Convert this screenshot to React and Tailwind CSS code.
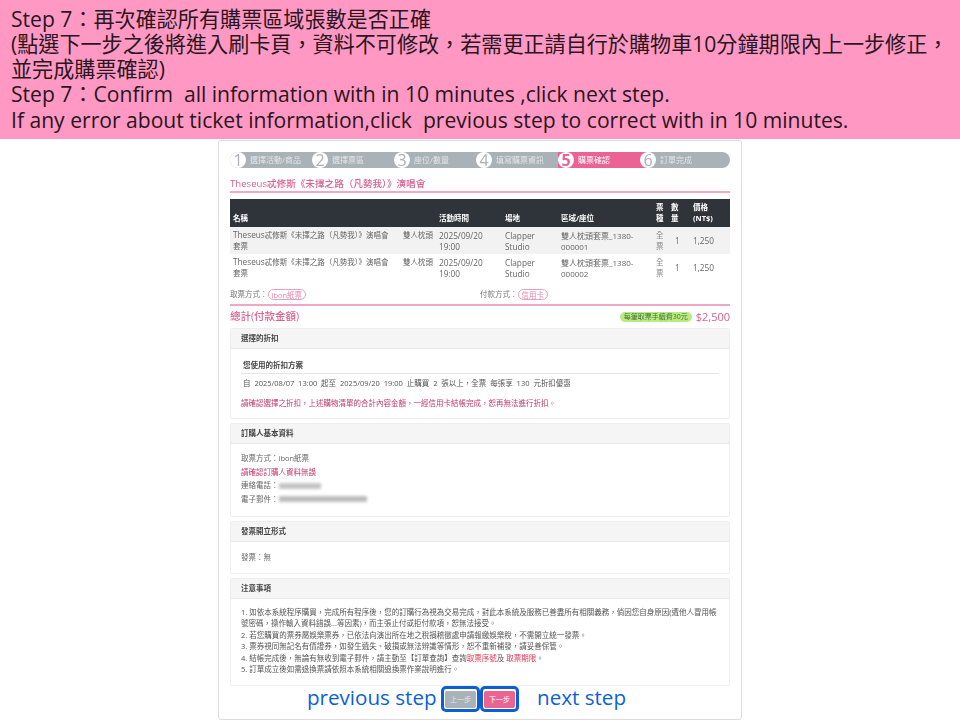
import React from "react";

const steps = ["選擇活動/商品", "選擇票區", "座位/數量", "填寫購票資訊", "購票確認", "訂單完成"];

const rows = [
  { seat: "雙人枕頭套票_1380-000001" },
  { seat: "雙人枕頭套票_1380-000002" },
];

const Panel = ({ title, className, children }) => (
  <div className={`border border-[#eeeeee] rounded-[2px] bg-white ${className}`}>
    <div className="h-5 bg-[#f5f5f5] border-b border-[#e8e8e8] pl-[10px] flex items-center text-[7.5px] font-semibold text-[#444]">
      {title}
    </div>
    {children}
  </div>
);

const App = () => {
  return (
    <div className="w-[960px] h-[720px] overflow-hidden bg-white font-['Open_Sans','Noto_Sans_CJK_TC',sans-serif]">
      <div className="h-[139px] bg-[#ff99c3] pl-[11px] pt-[5.5px] text-[21.1px] leading-[25.3px] text-[#2a1520] whitespace-nowrap">
        <div>Step 7：再次確認所有購票區域張數是否正確</div>
        <div>(點選下一步之後將進入刷卡頁，資料不可修改，若需更正請自行於購物車10分鐘期限內上一步修正，</div>
        <div>並完成購票確認)</div>
        <div>Step 7：Confirm&nbsp; all information with in 10 minutes ,click next step.</div>
        <div>If any error about ticket information,click&nbsp; previous step to correct with in 10 minutes.</div>
      </div>

      <div className="ml-[218px] mt-px w-[524px] h-[580px] border border-[#dddddd] rounded-[3px] px-[11px] pt-[11px] text-[#666]">
        <div className="blur-[0.3px]">
          {/* stepper */}
          <div className="h-4 flex rounded-full bg-[#a9b2b9] text-[8px] text-[#e3e7ea]">
            {steps.map((s, i) => (
              <div
                key={s}
                className={
                  i === 4
                    ? "w-[90px] -mr-2 h-4 flex items-center bg-[#ea6393] text-white"
                    : i === 5
                      ? "relative flex-1 h-4 flex items-center"
                      : "w-[82px] h-4 flex items-center"
                }
              >
                <span
                  className={`w-4 h-4 mr-[4px] shrink-0 rounded-full bg-white flex items-center justify-center text-[16px] ${
                    i === 4 ? "text-[#ea6393] font-bold" : "text-[#a9b2b9]"
                  }`}
                >
                  {i + 1}
                </span>
                {s}
              </div>
            ))}
          </div>

          <div className="mt-[9px] h-[16px] border-b-2 border-b-[#efa9c4] text-[9.6px] leading-[14px] text-[#d9628f] font-medium whitespace-nowrap">
            Theseus忒修斯《未擇之路（凡勢我）》演唱會
          </div>

          {/* order table */}
          <table className="mt-[6px] w-[500px] table-fixed border-collapse text-[7.5px] leading-[11px]">
            <colgroup>
              <col className="w-[170px]" />
              <col className="w-[36px]" />
              <col className="w-[66px]" />
              <col className="w-[56px]" />
              <col className="w-[95px]" />
              <col className="w-[14px]" />
              <col className="w-[23px]" />
              <col className="w-[40px]" />
            </colgroup>
            <thead>
              <tr className="h-[28px] bg-[#2f343b] text-white font-bold align-bottom">
                <th className="text-left pl-[3px] pb-[3px]">名稱</th>
                <th></th>
                <th className="text-left pl-[3px] pb-[3px]">活動時間</th>
                <th className="text-left pl-[3px] pb-[3px]">場地</th>
                <th className="text-left pl-[3px] pb-[3px]">區域/座位</th>
                <th className="text-left pl-[3px] pb-[3px]">票<br />種</th>
                <th className="text-left pl-[4px] pb-[3px]">數<br />量</th>
                <th className="text-left pl-[3px] pb-[3px]">價格<br />(NT$)</th>
              </tr>
            </thead>
            <tbody>
              {rows.map((r, i) => (
                <tr key={r.seat} className={`h-[27px] ${i === 0 ? "bg-[#f2f2f2]" : "bg-white"}`}>
                  <td className="pl-[3px] pr-[10px]"><span className="text-[8.25px]">Theseus</span>忒修斯《未擇之路（凡勢我）》演唱會套票</td>
                  <td className="pl-[3px] align-top pt-[3px] whitespace-nowrap">雙人枕頭</td>
                  <td className="pl-[3px] text-[8.25px]">2025/09/20<br />19:00</td>
                  <td className="pl-[3px] text-[8.25px]">Clapper<br />Studio</td>
                  <td className="pl-[3px] pr-[16px] text-[8px]">{r.seat}</td>
                  <td className="pl-[3px] text-[#888]">全票</td>
                  <td className="pl-[8px] text-[8.25px]">1</td>
                  <td className="pl-[3px] text-[8.25px]">1,250</td>
                </tr>
              ))}
            </tbody>
          </table>

          <div className="mt-[8px] h-[17px] flex text-[7.5px] text-[#777] border-b-2 border-b-[#efa9c4]">
            <div className="w-[250px] flex items-start">
              取票方式：
              <span className="px-[3px] h-[11px] leading-[10px] border border-[#e8a0bb] rounded-full text-[#e58aac]">ibon紙票</span>
            </div>
            <div className="flex items-start">
              付款方式：
              <span className="px-[3px] h-[11px] leading-[10px] border border-[#e8a0bb] rounded-full text-[#e58aac]">信用卡</span>
            </div>
          </div>

          <div className="h-[22px] flex items-center text-[#d9628f]">
            <span className="text-[10.5px] font-medium flex-1">總計(付款金額)</span>
            <span className="h-[10px] px-[4px] mr-[4px] rounded-full bg-[#b8ec80] text-[#4c6b3a] text-[7px] leading-[10px]">每筆取票手續費30元</span>
            <span className="text-[11px]">$2,500</span>
          </div>

          <Panel title="選擇的折扣" className="h-[91px] text-[7.5px]">
            <div className="px-[10px] pt-[9px]">
              <div className="pl-[2px] h-[16px] border-b border-[#e5e5e5] font-semibold text-[#444] leading-[15px]">您使用的折扣方案</div>
              <div className="pl-[2px] mt-[4px] leading-[11px] text-[#555] whitespace-nowrap">
                自&nbsp; 2025/08/07&nbsp; 13:00&nbsp; 起至&nbsp; 2025/09/20&nbsp; 19:00&nbsp; 止購買&nbsp; 2&nbsp; 張以上，全票&nbsp; 每張享&nbsp; 130&nbsp; 元折扣優惠
              </div>
              <div className="mt-[9px] text-[#c0396c] leading-[11px] whitespace-nowrap">
                請確認選擇之折扣，上述購物清單的合計內容金額，一經信用卡結帳完成，恕再無法進行折扣。
              </div>
            </div>
          </Panel>

          <Panel title="訂購人基本資料" className="mt-[4px] h-[94px] text-[7.5px]">
            <div className="px-[10px] pt-[8px] leading-[13.5px]">
              <div>取票方式：ibon紙票</div>
              <div className="text-[#c0396c]">請確認訂購人資料無誤</div>
              <div className="flex items-center">
                連絡電話：
                <span className="w-[42px] h-[6px] bg-[#c4c4c4] blur-[1.5px]"></span>
              </div>
              <div className="flex items-center">
                電子郵件：
                <span className="w-[88px] h-[6px] bg-[#bdbdbd] blur-[1.5px]"></span>
              </div>
            </div>
          </Panel>

          <Panel title="發票開立形式" className="mt-[4px] h-[53px] text-[7.5px]">
            <div className="px-[10px] pt-[10px] leading-[11px]">發票：無</div>
          </Panel>

          <Panel title="注意事項" className="mt-[4px] h-[108px] text-[7.5px]">
            <div className="px-[10px] pt-[8px] leading-[11.4px] text-[#555]">
              <div>1. 如依本系統程序購買，完成所有程序後，您的訂購行為視為交易完成，對此本系統及服務已善盡所有相關義務，倘因您自身原因(遭他人冒用帳號密碼，操作輸入資料錯誤...等因素)，而主張止付或拒付款項，恕無法接受。</div>
              <div>2. 若您購買的票券屬娛樂票券，已依法向演出所在地之稅捐稽徵處申請報繳娛樂稅，不需開立統一發票。</div>
              <div>3. 票券視同無記名有價證券，如發生遺失、破損或無法辨識等情形，恕不重新補發，請妥善保管。</div>
              <div>
                4. 結帳完成後，無論有無收到電子郵件，請主動至【訂單查詢】查詢<span className="text-[#e0334f]">取票序號</span>及 <span className="text-[#e0334f]">取票期限</span>。
              </div>
              <div>5. 訂單成立後如需退換票請依照本系統相關退換票作業說明進行。</div>
            </div>
          </Panel>
        </div>

        {/* buttons with the blue callouts */}
        <div className="ml-[77px] h-[26px] flex items-center whitespace-nowrap text-[20.6px] text-[#0b5fd6]">
          <span className="w-[134px] pb-[4px]">previous step</span>
          <span className="w-[39px] h-[26px] border-[3px] border-[#0b5fd6] rounded-[5px] flex items-center justify-center">
            <span className="w-[31px] h-[17px] bg-[#a9b2b9] rounded-[2px] text-[7px] text-[#e3e7ea] text-center leading-[17px]">上一步</span>
          </span>
          <span className="w-[39px] h-[26px] border-[3px] border-[#0b5fd6] rounded-[5px] flex items-center justify-center">
            <span className="w-[31px] h-[17px] bg-[#ea6393] rounded-[2px] text-[7px] text-white text-center leading-[17px]">下一步</span>
          </span>
          <span className="ml-[18px] pb-[4px]">next step</span>
        </div>
      </div>
    </div>
  );
};

export default App;
